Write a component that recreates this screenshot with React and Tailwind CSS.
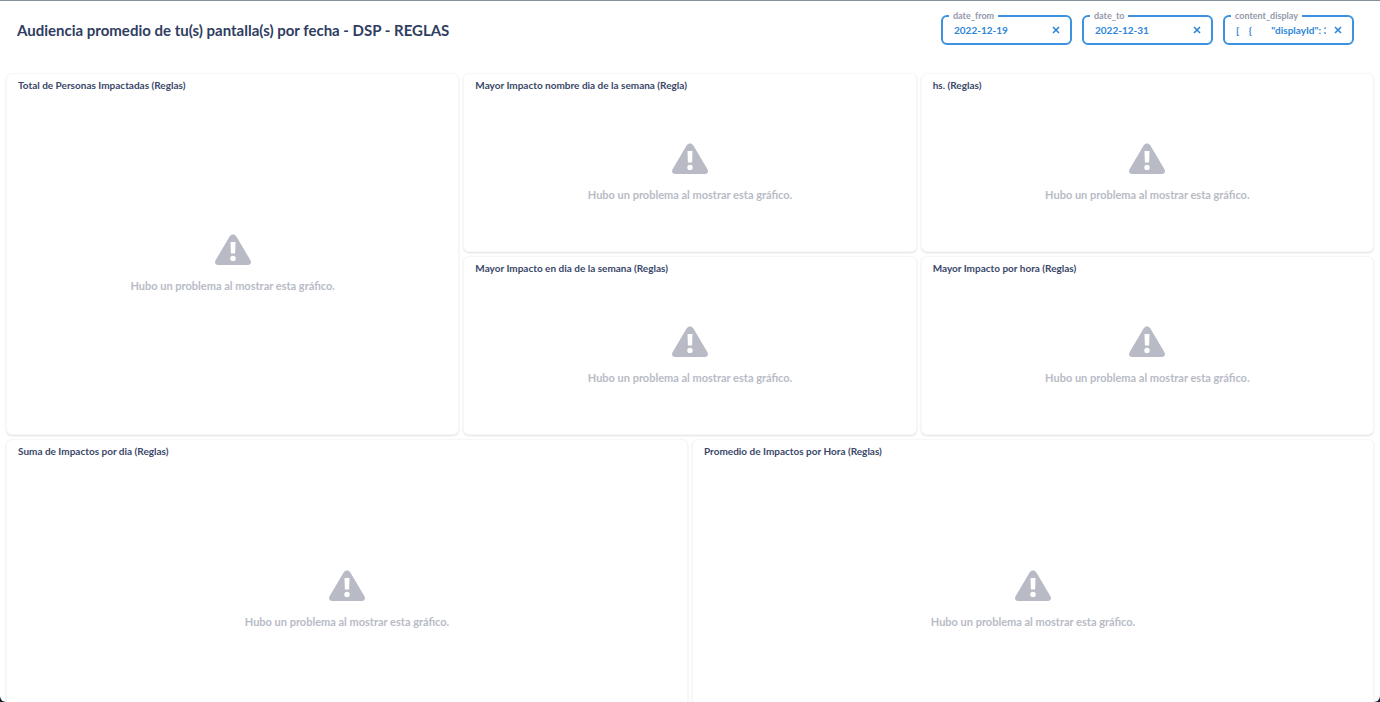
import React, { useState } from "react";

const initialFilters = [
    { id: "date_from", value: "2022-12-19" },
    { id: "date_to", value: "2022-12-31" },
    { id: "content_display", value: "[    {        \"displayId\": 3142   } ]" },
];

const WarningIcon = () => (
    <svg viewBox="0 0 36 32" className="w-9 h-8" fill="currentColor" aria-hidden="true">
        <path
            fillRule="evenodd"
            d="M14.6 2.6C15.5 1.1 16.6.5 18 .5s2.500.6 3.400 2.100l13.900 23.400c1.500 2.600.4 4.900-2.500 4.900H3.200C.3 30.900-.8 28.600.7 26zM15.500 8l.4 11.600h4.200L20.500 8zM18 21.700a2.700 2.700 0 1 0 0 5.400 2.700 2.700 0 0 0 0-5.400z"
        />
    </svg>
);

const FilterBox = ({ id, value, onChange, onClear }) => (
    <fieldset className="w-[131px] h-[37px] min-w-0 border-2 border-[#3d92e0] rounded-md px-[6px]">
        <legend className="px-1 text-[9px] leading-4 font-bold text-[#949aab]">
            <label htmlFor={id}>{id}</label>
        </legend>
        <div className="flex items-center gap-1 h-3">
            <input
                id={id}
                type="text"
                value={value}
                onChange={(e) => onChange(id, e.target.value)}
                className="flex-1 min-w-0 h-4 pl-[5px] bg-transparent outline-none text-[10px] font-bold text-[#2d86d9] whitespace-pre"
            />
            <button
                type="button"
                aria-label={`Clear ${id}`}
                onClick={() => onClear(id)}
                className="w-4 h-4 flex items-center justify-center text-[#2d86d9]"
            >
                <svg viewBox="0 0 8 8" className="w-2 h-2" fill="none" stroke="currentColor" strokeWidth="1.600">
                    <path d="M1 1l6 6M7 1L1 7" />
                </svg>
            </button>
        </div>
    </fieldset>
);

const ChartCard = ({ title, className = "" }) => (
    <section className={`flex flex-col bg-white rounded-md border border-[#f7f7f8] shadow-[0_1px_2px_rgba(0,0,0,0.12)] ${className}`}>
        <h2 className="px-[11px] pt-[3px] pb-px text-[10px] leading-4 font-bold text-[#3a4769]">{title}</h2>
        <div className="flex-1 flex flex-col items-center justify-center gap-3 text-[#b8bbc6]">
            <WarningIcon />
            <p className="text-[11px] leading-4 font-bold">Hubo un problema al mostrar esta gráfico.</p>
        </div>
    </section>
);

const App = () => {
    const [filters, setFilters] = useState(initialFilters);

    const handleChange = (id, value) => {
        setFilters(filters.map((f) => (f.id === id ? { ...f, value } : f)));
    };

    return (
        <div className="h-screen bg-[#10202f] font-['Lato',sans-serif]">
            <div className="h-full overflow-hidden bg-white border-t border-[#84909a] rounded-b-md">
                {/* Title and filters */}
                <header className="flex items-start justify-between pl-[17px] pr-[26px] pt-[7px] h-[72px]">
                    <h1 className="pt-[10px] text-[15px] leading-6 font-bold text-[#2f3d61]">
                        Audiencia promedio de tu(s) pantalla(s) por fecha - DSP - REGLAS
                    </h1>
                    <div className="flex gap-[10px]">
                        {filters.map((f) => (
                            <FilterBox
                                key={f.id}
                                id={f.id}
                                value={f.value}
                                onChange={handleChange}
                                onClear={(id) => handleChange(id, "")}
                            />
                        ))}
                    </div>
                </header>

                {/* Dashboard grid */}
                <main className="grid grid-cols-6 auto-rows-[179px] gap-1 px-[6px]">
                    <ChartCard title="Total de Personas Impactadas (Reglas)" className="col-span-2 row-span-2" />
                    <ChartCard title="Mayor Impacto nombre dia de la semana (Regla)" className="col-span-2" />
                    <ChartCard title="hs. (Reglas)" className="col-span-2" />
                    <ChartCard title="Mayor Impacto en dia de la semana (Reglas)" className="col-span-2" />
                    <ChartCard title="Mayor Impacto por hora (Reglas)" className="col-span-2" />
                    <ChartCard title="Suma de Impactos por dia (Reglas)" className="col-span-3 h-[302px]" />
                    <ChartCard title="Promedio de Impactos por Hora (Reglas)" className="col-span-3 h-[302px]" />
                </main>
            </div>
        </div>
    );
};

export default App;
